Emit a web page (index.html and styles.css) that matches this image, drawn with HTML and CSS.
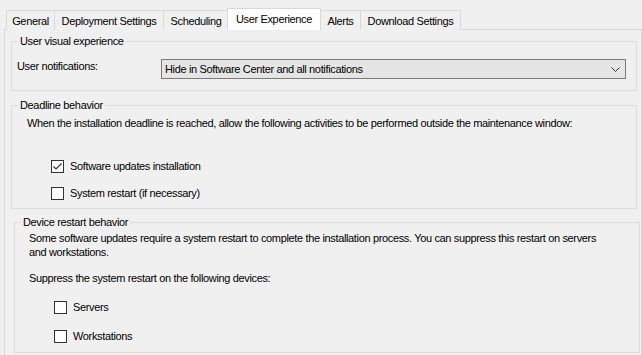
FILE: index.html
```html
<!DOCTYPE html>
<html lang="en">
<head>
    <meta charset="UTF-8">
    <title>User Experience</title>
    <link rel="stylesheet" href="styles.css">
</head>
<body>
    <div class="window">
        <div class="tabs">
            <div class="tab tab-general">General</div>
            <div class="tab tab-deployment">Deployment Settings</div>
            <div class="tab tab-scheduling">Scheduling</div>
            <div class="tab tab-experience active">User Experience</div>
            <div class="tab tab-alerts">Alerts</div>
            <div class="tab tab-download">Download Settings</div>
        </div>

        <div class="page">
            <fieldset class="group group-visual">
                <legend>User visual experience</legend>
                <div class="field">
                    <label class="field-label">User notifications:</label>
                    <div class="combo">
                        <span>Hide in Software Center and all notifications</span>
                        <svg class="chevron" width="9" height="5" viewBox="0 0 9 5">
                            <polyline points="0.5,0.5 4.5,4.5 8.5,0.5" fill="none" stroke="#333" stroke-width="1"/>
                        </svg>
                    </div>
                </div>
            </fieldset>

            <fieldset class="group group-deadline">
                <legend>Deadline behavior</legend>
                <p class="note">When the installation deadline is reached, allow the following activities to be performed outside the maintenance window:</p>
                <div class="checks">
                    <label class="check">
                        <span class="box">
                            <svg width="11" height="11" viewBox="0 0 11 11">
                                <polyline points="1.5,5.5 4,8 9.5,2.5" fill="none" stroke="#333" stroke-width="1.2"/>
                            </svg>
                        </span>
                        Software updates installation
                    </label>
                    <label class="check">
                        <span class="box"></span>
                        System restart (if necessary)
                    </label>
                </div>
            </fieldset>

            <fieldset class="group group-restart">
                <legend>Device restart behavior</legend>
                <p class="note">Some software updates require a system restart to complete the installation process. You can suppress this restart on servers<br>and workstations.</p>
                <p class="note suppress">Suppress the system restart on the following devices:</p>
                <div class="checks">
                    <label class="check">
                        <span class="box"></span>
                        Servers
                    </label>
                    <label class="check">
                        <span class="box"></span>
                        Workstations
                    </label>
                </div>
            </fieldset>
        </div>
    </div>
</body>
</html>
```

FILE: styles.css
```css
* { margin: 0; padding: 0; box-sizing: border-box; }
body {
    font-family: "Liberation Sans", Arial, sans-serif;
    font-size: 11px;
    letter-spacing: -0.35px;
    line-height: 14px;
    color: #000;
    background: #f0f0f0;
}
.window {
    width: 642px;
    height: 355px;
    overflow: hidden;
}

/* tab strip */
.tabs {
    display: flex;
    align-items: flex-end;
    height: 30px;
    padding-left: 6px;
}
.tab {
    height: 20px;
    line-height: 20px;
    text-align: center;
    border: 1px solid #d9d9d9;
    border-bottom: none;
    margin-right: -1px;
    background: #f0f0f0;
    white-space: nowrap;
}
.tab-general { width: 49px; }
.tab-deployment { width: 110px; }
.tab-scheduling { width: 66px; }
.tab-experience { width: 94px; }
.tab-alerts { width: 41px; }
.tab-download { width: 101px; }
.tab.active {
    position: relative;
    z-index: 1;
    height: 22px;
    margin-left: -1px;
    line-height: 20px;
    background: #fff;
}

/* page */
.page {
    width: 638px;
    height: 330px;
    margin: -1px 0 0 4px;
    border: 1px solid #d9d9d9;
}

/* group boxes */
.group {
    width: 626px;
    border: 1px solid #dcdcdc;
}
.group legend {
    padding: 0 2px;
    line-height: 14px;
}
.group-visual {
    margin: 4px 0 0 6px;
    padding: 11px 10px 11px 5px;
}
.group-visual legend { margin-left: 1px; }
.group-deadline {
    margin: 7px 0 0 6px;
    padding: 4px 10px 8px 15px;
}
.group-deadline legend { margin-left: -9px; }
.group-restart {
    margin: 6px 0 0 9px;
    padding: 2px 10px 9px 14px;
}
.group-restart legend { margin-left: -8px; }

.field {
    display: flex;
    align-items: flex-start;
}
.field-label {
    width: 144px;
    flex: none;
}
.combo {
    flex: 1;
    height: 20px;
    display: flex;
    align-items: center;
    justify-content: space-between;
    padding: 0 4px 0 3px;
    background: #e5e5e5;
    border: 1px solid #7a7a7a;
}
.chevron { margin-right: 1px; }

.note { white-space: nowrap; }
.suppress { margin-top: 12px; }

.checks {
    display: flex;
    flex-direction: column;
    gap: 13px;
    padding-left: 24px;
}
.group-deadline .checks { margin-top: 29px; }
.group-restart .checks {
    margin-top: 15px;
    gap: 15px;
    padding-left: 25px;
}
.check {
    display: flex;
    align-items: center;
    gap: 6px;
    height: 14px;
}
.box {
    width: 13px;
    height: 13px;
    flex: none;
    display: flex;
    align-items: center;
    justify-content: center;
    background: #fff;
    border: 1px solid #333;
}
```
